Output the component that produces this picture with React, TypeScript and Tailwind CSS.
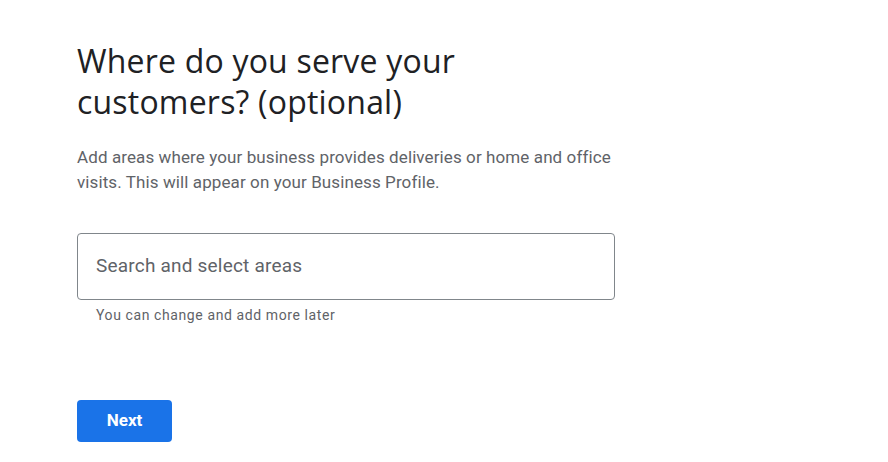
export default function App() {
  return (
    <div className="min-h-[462px] w-[888px] bg-white">
      <div className="flex w-[538px] flex-col pl-[77px] pt-[40px]" style={{ boxSizing: "content-box" }}>
        <h1 className="text-[32px] leading-[41px] font-normal text-[#202124] font-['Open_Sans',Roboto,sans-serif] tracking-[0.2px]">
          Where do you serve your
          <br />
          customers? (optional)
        </h1>
        <p className="mt-[23px] text-[17px] leading-[25px] tracking-[0.1px] text-[#5f6368] font-['Roboto',sans-serif]">
          Add areas where your business provides deliveries or home and office visits. This will appear on your Business Profile.
        </p>
        <div className="mt-[38px] flex h-[67px] items-center rounded-[4px] border border-[#80868b] px-[18px]">
          <span className="text-[19px] tracking-[0.2px] text-[#5f6368] font-['Roboto',sans-serif]">Search and select areas</span>
        </div>
        <p className="mt-[7px] pl-[19px] text-[14px] leading-[16px] tracking-[0.6px] text-[#5f6368] font-['Roboto',sans-serif]">
          You can change and add more later
        </p>
        <div className="mt-[77px]">
          <button className="h-[42px] w-[95px] rounded-[4px] bg-[#1a73e8] text-[17px] font-bold text-white font-['Roboto',sans-serif]">
            Next
          </button>
        </div>
      </div>
    </div>
  );
}
